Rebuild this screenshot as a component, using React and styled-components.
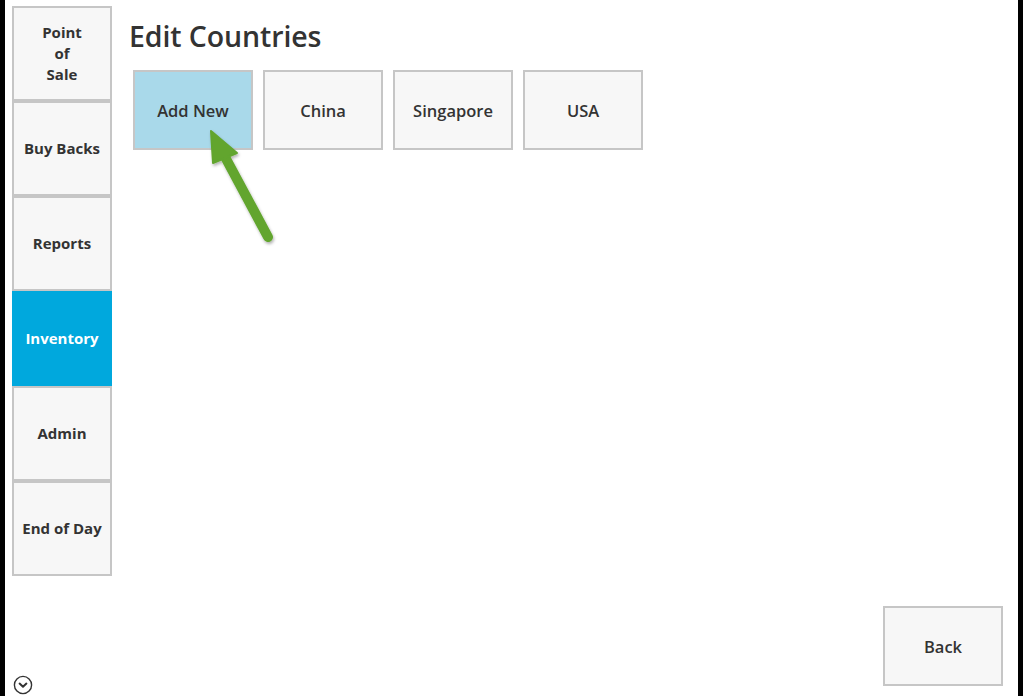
import React from "react";
import styled, { createGlobalStyle } from "styled-components";

/** global */
const GlobalStyle = createGlobalStyle`
  html, body {
    margin: 0;
    padding: 0;
    background: #ffffff;
  }
  body {
    font-family: "Open Sans", "Noto Sans", Arial, sans-serif;
    color: #333333;
  }
`;

/** styled component */
const Frame = styled.div`
  display: flex;
  height: 696px;
  width: 1023px;
  overflow: hidden;
`;

const Edge = styled.div`
  width: ${(props) => props.$w}px;
  flex-shrink: 0;
  background-color: #000000;
`;

const Sidebar = styled.nav`
  display: flex;
  flex-direction: column;
  width: 100px;
  margin-left: 7px;
  padding-top: 6px;
`;

const NavButton = styled.div`
  box-sizing: border-box;
  height: 95px;
  display: flex;
  align-items: center;
  border: 2px solid ${(props) => (props.$active ? "#00a8dd" : "#c6c6c6")};
  background-color: ${(props) => (props.$active ? "#00a8dd" : "#f7f7f7")};
  color: ${(props) => (props.$active ? "#ffffff" : "#333333")};
  font-weight: 700;
  font-size: 15px;
  line-height: 21px;
  cursor: pointer;
`;

const NavLabel = styled.span`
  display: block;
  width: 100%;
  padding: 0 6px;
  box-sizing: border-box;
  text-align: center;
  white-space: nowrap;
  overflow: hidden;
`;

const MoreToggle = styled.div`
  margin-top: auto;
  margin-left: 1px;
  margin-bottom: 1px;
  width: 20px;
  height: 20px;
`;

const Main = styled.main`
  flex: 1;
  display: flex;
  flex-direction: column;
  padding-left: 17px;
`;

const Title = styled.h1`
  margin: 16px 0 0;
  font-size: 28.5px;
  font-weight: 600;
  line-height: 40px;
  color: #333333;
  letter-spacing: -0.1px;
`;

const TileArea = styled.div`
  position: relative;
  margin-top: 14px;
  margin-left: 4px;
`;

const TileRow = styled.div`
  display: flex;
  gap: 10px;
`;

const Tile = styled.div`
  box-sizing: border-box;
  width: 120px;
  height: 80px;
  display: flex;
  align-items: center;
  justify-content: center;
  border: 2px solid #c6c6c6;
  background-color: ${(props) => (props.$highlight ? "#a9d9ea" : "#f7f7f7")};
  font-size: 16.5px;
  font-weight: 600;
  color: #333333;
  cursor: pointer;
`;

const Pointer = styled.svg`
  position: absolute;
  left: 67px;
  top: 55px;
  overflow: visible;
`;

const Footer = styled.div`
  margin-top: auto;
  display: flex;
  justify-content: flex-end;
  padding: 0 15px 10px 0;
`;

const countries = ["China", "Singapore", "USA"];

const navItems = [
  { key: "pos", label: ["Point", "of", "Sale"] },
  { key: "buy", label: ["Buy Backs"] },
  { key: "rep", label: ["Reports"] },
  { key: "inv", label: ["Inventory"], active: true },
  { key: "adm", label: ["Admin"] },
  { key: "eod", label: ["End of Day"] },
];

/** App */
const App = () => {
  return (
    <>
      <GlobalStyle />
      <Frame>
        <Edge $w={5} />
        <Sidebar>
          {navItems.map((item) => (
            <NavButton key={item.key} $active={item.active}>
              <NavLabel>
                {item.label.map((line, i) => (
                  <React.Fragment key={line}>
                    {i > 0 && <br />}
                    {line}
                  </React.Fragment>
                ))}
              </NavLabel>
            </NavButton>
          ))}
          <MoreToggle>
            <svg width="20" height="20" viewBox="0 0 20 20">
              <circle cx="10" cy="10" r="8.6" fill="none" stroke="#333" strokeWidth="1.4" />
              <path d="M6.6 8.6 L10 11.8 L13.4 8.6" fill="none" stroke="#333" strokeWidth="2" strokeLinecap="round" strokeLinejoin="round" />
            </svg>
          </MoreToggle>
        </Sidebar>
        <Main>
          <Title>Edit Countries</Title>
          <TileArea>
            <TileRow>
              <Tile $highlight>Add New</Tile>
              {countries.map((c) => (
                <Tile key={c}>{c}</Tile>
              ))}
            </TileRow>
            <Pointer width="75" height="115" viewBox="0 0 75 115">
              <defs>
                <filter id="arrowShadow" x="-30%" y="-30%" width="160%" height="160%">
                  <feDropShadow dx="1" dy="2" stdDeviation="1.5" floodColor="#000" floodOpacity="0.3" />
                </filter>
              </defs>
              <g filter="url(#arrowShadow)" fill="#62a52f" stroke="#62a52f">
                <line x1="24" y1="30" x2="68" y2="112" strokeWidth="10" strokeLinecap="round" />
                <polygon points="11,6 13,38 37,28" strokeWidth="2" strokeLinejoin="round" />
              </g>
            </Pointer>
          </TileArea>
          <Footer>
            <Tile>Back</Tile>
          </Footer>
        </Main>
        <Edge $w={5} />
      </Frame>
    </>
  );
};

export default App;
